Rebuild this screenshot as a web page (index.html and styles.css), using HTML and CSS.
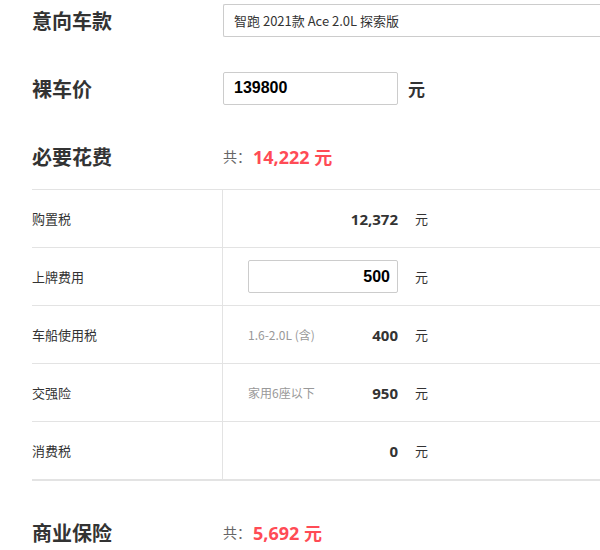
FILE: index.html
```html
<!DOCTYPE html>
<html lang="zh-CN">
<head>
    <meta charset="UTF-8">
    <title>购车计算器</title>
    <link rel="stylesheet" href="styles.css">
</head>
<body>
    <div class="calc">
        <div class="line">
            <div class="line-title">意向车款</div>
            <input class="car-input" type="text" value="智跑 2021款 Ace 2.0L 探索版" readonly>
        </div>

        <div class="line">
            <div class="line-title">裸车价</div>
            <input class="price-input" type="text" value="139800">
            <span class="price-unit">元</span>
        </div>

        <div class="line">
            <div class="line-title">必要花费</div>
            <span class="sum-label">共：</span>
            <span class="sum">14,222 元</span>
        </div>

        <div class="fee-table">
            <div class="fee-row">
                <div class="fee-name">购置税</div>
                <div class="fee-value">
                    <div class="fee-amount"><span></span><b>12,372</b></div>
                    <span class="fee-unit">元</span>
                </div>
            </div>
            <div class="fee-row">
                <div class="fee-name">上牌费用</div>
                <div class="fee-value">
                    <input class="fee-input" type="text" value="500">
                    <span class="fee-unit">元</span>
                </div>
            </div>
            <div class="fee-row">
                <div class="fee-name">车船使用税</div>
                <div class="fee-value">
                    <div class="fee-amount"><span class="fee-note">1.6-2.0L (含)</span><b>400</b></div>
                    <span class="fee-unit">元</span>
                </div>
            </div>
            <div class="fee-row">
                <div class="fee-name">交强险</div>
                <div class="fee-value">
                    <div class="fee-amount"><span class="fee-note">家用6座以下</span><b>950</b></div>
                    <span class="fee-unit">元</span>
                </div>
            </div>
            <div class="fee-row">
                <div class="fee-name">消费税</div>
                <div class="fee-value">
                    <div class="fee-amount"><span></span><b>0</b></div>
                    <span class="fee-unit">元</span>
                </div>
            </div>
        </div>

        <div class="line line-last">
            <div class="line-title">商业保险</div>
            <span class="sum-label">共：</span>
            <span class="sum">5,692 元</span>
        </div>
    </div>
</body>
</html>
```

FILE: styles.css
```css
* { margin: 0; padding: 0; box-sizing: border-box; }
html, body { overflow: hidden; }
body { font-family: "Open Sans", "Noto Sans CJK SC", sans-serif; color: #333; background: #fff; padding: 3px 0 0 32px; }
.calc { width: 568px; }

.line { display: flex; align-items: center; height: 34px; margin-bottom: 34px; }
.line-title { width: 191px; flex-shrink: 0; font-size: 20px; font-weight: bold; color: #333; }
.line-last { margin-top: 34px; margin-bottom: 0; }

/* the model box runs on past the right edge of the view */
.car-input { flex: 1; min-width: 0; height: 33px; border: 1px solid #ccc; border-right: none; border-radius: 2px 0 0 2px; padding: 0 10px; font-family: "Noto Sans CJK SC", sans-serif; font-size: 13px; color: #333; outline: none; }
.price-input { width: 175px; height: 33px; border: 1px solid #ccc; border-radius: 2px; padding: 0 10px; font-family: "Liberation Sans", Arial, sans-serif; font-size: 16px; font-weight: bold; color: #000; outline: none; }
.price-unit { margin-left: 10px; font-size: 17px; font-weight: bold; color: #333; }

.sum-label { font-size: 14px; color: #666; }
.sum { font-size: 18px; font-weight: bold; color: #ff4b55; margin-left: 2px; }

.fee-table { margin-top: -18px; border-bottom: 2px solid #e3e3e3; }
.fee-row { display: flex; height: 58px; border-top: 1px solid #e3e3e3; }
.fee-name { width: 191px; border-right: 1px solid #e3e3e3; display: flex; align-items: center; font-family: "Noto Sans CJK SC", sans-serif; font-size: 13px; color: #333; }
.fee-value { display: flex; align-items: center; padding-left: 25px; }
.fee-amount { width: 150px; display: flex; justify-content: space-between; align-items: center; }
.fee-amount b { font-size: 15px; color: #333; }
.fee-note { font-family: "Noto Sans CJK SC", sans-serif; font-size: 12px; color: #999; }
.fee-unit { margin-left: 17px; font-family: "Noto Sans CJK SC", sans-serif; font-size: 13px; color: #333; }
.fee-input { width: 150px; height: 33px; border: 1px solid #ccc; border-radius: 2px; padding: 0 7px; text-align: right; font-family: "Liberation Sans", Arial, sans-serif; font-size: 16px; font-weight: bold; color: #000; outline: none; }
```
